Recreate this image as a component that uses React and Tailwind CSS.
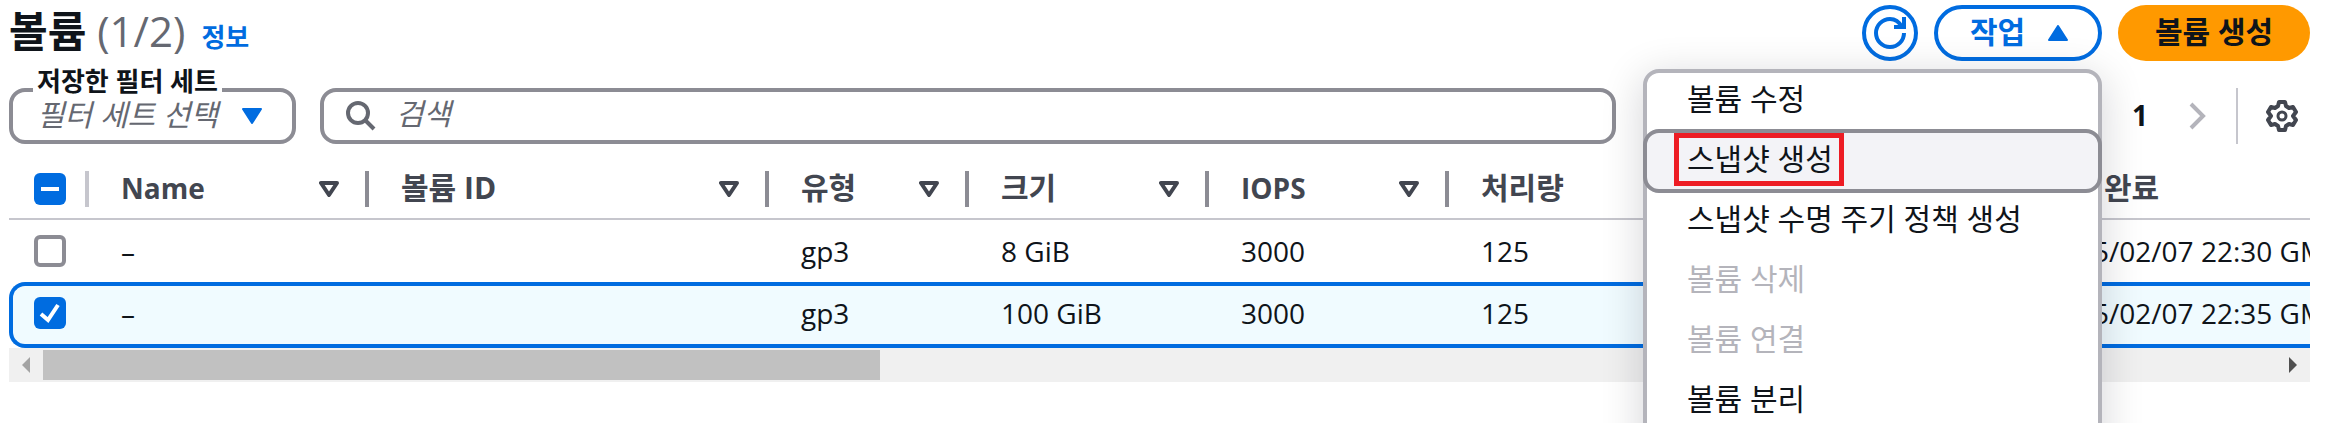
import React, { useState } from 'react';

const actions = [
  { label: '볼륨 수정' },
  { label: '스냅샷 생성', active: true },
  { label: '스냅샷 수명 주기 정책 생성' },
  { label: '볼륨 삭제', disabled: true },
  { label: '볼륨 연결', disabled: true },
  { label: '볼륨 분리' },
];

const columns = [
  { key: 'name', label: 'Name', width: 'w-[280px]' },
  { key: 'volumeId', label: '볼륨 ID', width: 'w-[400px]' },
  { key: 'type', label: '유형', width: 'w-[200px]' },
  { key: 'size', label: '크기', width: 'w-[240px]' },
  { key: 'iops', label: 'IOPS', width: 'w-[240px]' },
  { key: 'throughput', label: '처리량', width: 'w-[280px]' },
  { key: 'snapshot', label: '', width: 'w-[280px]' },
  { key: 'created', label: '생성 완료', width: '' },
];

const volumes = [
  { id: 1, name: '–', type: 'gp3', size: '8 GiB', iops: '3000', throughput: '125', created: '2025/02/07 22:30 GMT+9' },
  { id: 2, name: '–', type: 'gp3', size: '100 GiB', iops: '3000', throughput: '125', created: '2025/02/07 22:35 GMT+9' },
];

const SortIcon = () => (
  <svg width="20" height="16" viewBox="0 0 20 16" fill="none" stroke="currentColor" strokeWidth="4" strokeLinejoin="round" aria-hidden="true">
    <path d="M2 2h16l-8 12z" />
  </svg>
);

const Caret = ({ up }) => (
  <svg width="20" height="16" viewBox="0 0 20 16" fill="currentColor" stroke="currentColor" strokeWidth="2" strokeLinejoin="round" aria-hidden="true">
    <path d={up ? 'M10 1l9 14H1z' : 'M1 1h18l-9 14z'} />
  </svg>
);

const Checkbox = ({ label, checked, mixed, onChange }) => (
  <span className="relative block size-8">
    <input
      type="checkbox"
      aria-label={label}
      checked={checked}
      onChange={onChange}
      className={`block size-8 appearance-none rounded-md ${checked ? 'bg-[#006ce0]' : 'border-4 border-[#8c8c94] bg-white'}`}
    />
    {checked && (
      <svg className="pointer-events-none absolute inset-0" width="32" height="32" viewBox="0 0 32 32" fill="none" stroke="#fff" strokeWidth="4" aria-hidden="true">
        <path d={mixed ? 'M7 16h18' : 'M7 17l7 6L24 8'} />
      </svg>
    )}
  </span>
);

const ActionsMenu = () => (
  <div className="absolute right-0 top-16 z-10 w-[459px] rounded-2xl border-4 border-[#b4b4bb] bg-white pb-16 shadow-[0_8px_40px_2px_rgba(0,7,22,0.16)]">
    <ul role="menu" className="-mt-0.5 text-[30px] leading-9">
      {actions.map(({ label, active, disabled }) => (
        <li key={label} role="none">
          {active ? (
            <button role="menuitem" className="-mx-1 -my-0.5 flex h-16 w-[459px] items-start rounded-2xl border-4 border-[#8c8c94] bg-[#f3f3f7] pl-[27px]">
              <span className="flex h-[53px] items-center border-[5px] border-[#ed1c24] pb-0.5 pl-2 pr-1.5">{label}</span>
            </button>
          ) : (
            <button role="menuitem" disabled={disabled} className="flex h-15 w-full items-center pb-1 pl-10 disabled:text-[#b4b4bb]">
              {label}
            </button>
          )}
        </li>
      ))}
    </ul>
  </div>
);

const Header = ({ selectedCount }) => (
  <header className="flex items-start justify-between pt-[5px]">
    <div className="flex h-14 items-baseline">
      <h1 className="text-[42px] font-bold leading-13">
        볼륨 <span className="font-normal text-[#656871]">({selectedCount}/{volumes.length})</span>
      </h1>
      <a href="#info" className="ml-4 text-[26px] font-bold leading-9 text-[#006ce0]">정보</a>
    </div>
    <div className="flex h-14 gap-4 text-[30px] font-bold">
      <button aria-label="새로 고침" className="flex size-14 items-center justify-center rounded-full border-4 border-[#006ce0] text-[#006ce0]">
        <svg width="32" height="32" viewBox="0 0 32 32" fill="none" stroke="currentColor" strokeWidth="4" aria-hidden="true">
          <path d="M30 16a14 14 0 1 1-14-14c5 0 9 2.500 12 8" />
          <path d="M30 0v10H20" />
        </svg>
      </button>
      <div className="relative">
        <button aria-expanded="true" className="flex h-14 w-[168px] items-center justify-between rounded-full border-4 border-[#006ce0] pl-8 pr-[30px] text-[#006ce0]">
          <span className="pb-1">작업</span>
          <Caret up />
        </button>
        <div className="font-normal"><ActionsMenu /></div>
      </div>
      <button className="h-14 w-48 rounded-full bg-[#ff9900] pb-1">볼륨 생성</button>
    </div>
  </header>
);

const Filters = () => (
  <div className="mt-[27px] flex h-14 items-center">
    <div className="relative w-[287px] shrink-0">
      <label htmlFor="filter-set" className="absolute -top-[21px] left-6 bg-white px-1 text-[26px] font-bold leading-7">저장한 필터 세트</label>
      <select id="filter-set" className="block h-14 w-full appearance-none rounded-2xl border-4 border-[#8c8c94] pb-1.5 pl-6 pr-[68px] text-[30px] italic text-[#656871]">
        <option>필터 세트 선택</option>
      </select>
      <span className="pointer-events-none absolute right-[34px] top-5 text-[#006ce0]"><Caret /></span>
    </div>
    <div className="ml-6 flex h-14 max-w-[1296px] flex-1 items-center rounded-2xl border-4 border-[#8c8c94] pl-[22px] text-[#656871]">
      <svg width="30" height="30" viewBox="0 0 30 30" fill="none" stroke="currentColor" strokeWidth="4" aria-hidden="true">
        <circle cx="12" cy="12" r="10" />
        <path d="M19 19l9 9" />
      </svg>
      <input type="search" aria-label="검색" placeholder="검색" className="ml-5 h-12 flex-1 pb-1.5 text-[30px] italic outline-none placeholder:text-[#656871]" />
    </div>
    <nav className="ml-auto flex h-14 items-center">
      <button className="w-8 pb-0.5 text-[28px] font-bold">1</button>
      <button aria-label="다음 페이지" disabled className="ml-8 text-[#b4b4bb]">
        <svg width="20" height="28" viewBox="0 0 20 28" fill="none" stroke="currentColor" strokeWidth="4" aria-hidden="true">
          <path d="M3 2l12 12L3 26" />
        </svg>
      </button>
      <span className="ml-7 h-14 w-0.5 bg-[#c6c6cd]" />
      <button aria-label="기본 설정" className="ml-7 mr-3 text-[#424650]">
        <svg width="32" height="32" viewBox="0 0 32 32" fill="none" stroke="currentColor" strokeWidth="4" strokeLinejoin="round" aria-hidden="true">
          <path d="M13 2h6l1 4 3 2 4-1 3 5-3 4 3 4-3 5-4-1-3 2-1 4h-6l-1-4-3-2-4 1-3-5 3-4-3-4 3-5 4 1 3-2z" />
          <circle cx="16" cy="16" r="4" strokeWidth="3" />
        </svg>
      </button>
    </nav>
  </div>
);

const VolumeTable = ({ selected, onToggle }) => (
  <div className="mt-4 overflow-hidden">
    <table className="w-full table-fixed border-separate border-spacing-0 text-left text-[28px] leading-9">
      <thead className="text-[#424650]">
        <tr>
          <th className="h-15 w-20 border-b-2 border-[#c6c6cd] p-0">
            <div className="flex items-center justify-between pl-[25px]">
              <Checkbox label="모두 선택" checked mixed onChange={() => {}} />
              <span className="h-9 w-1 bg-[#c6c6cd]" />
            </div>
          </th>
          {columns.map((col) => (
            <th key={col.key} className={`h-15 border-b-2 border-[#c6c6cd] p-0 ${col.width}`}>
              <div className="flex items-center pl-8">
                <span className={`flex-1 whitespace-nowrap pb-0.5 font-bold leading-8 ${/^[A-Z]/i.test(col.label) ? 'text-[28px]' : 'text-[30px]'}`}>{col.label}</span>
                {col.width && (
                  <>
                    <SortIcon />
                    <span className="ml-[26px] h-9 w-1 bg-[#8c8c94]" />
                  </>
                )}
              </div>
            </th>
          ))}
        </tr>
      </thead>
      <tbody>
        {volumes.map((volume) => {
          const isSelected = selected.includes(volume.id);
          const cell = isSelected ? 'h-[66px] border-y-4 border-[#006ce0] bg-[#f0fbff] pt-0 pb-1' : 'h-[62px] py-0';
          return (
            <tr key={volume.id}>
              <td className={`${cell} pr-0 ${isSelected ? 'rounded-l-2xl border-l-4 pl-[21px]' : 'pl-[25px]'}`}>
                <Checkbox label={`볼륨 ${volume.id}`} checked={isSelected} onChange={() => onToggle(volume.id)} />
              </td>
              {columns.map((col) => (
                <td key={col.key} className={`${cell} overflow-hidden whitespace-nowrap pr-0 ${col.key === 'created' ? 'pl-9' : 'pl-8'}`}>{volume[col.key]}</td>
              ))}
            </tr>
          );
        })}
      </tbody>
    </table>
    <div className="flex h-[34px] items-center bg-[#f0f0f0]">
      <svg className="mx-[13px] shrink-0" width="8" height="16" viewBox="0 0 8 16" fill="#a3a3a3" aria-hidden="true"><path d="M8 0v16L0 8z" /></svg>
      <div className="flex-1">
        <div className="h-[30px] w-[37.5%] bg-[#c1c1c1]" />
      </div>
      <svg className="mx-[13px] shrink-0" width="8" height="16" viewBox="0 0 8 16" fill="#505050" aria-hidden="true"><path d="M0 0v16l8-8z" /></svg>
    </div>
  </div>
);

const App = () => {
  const [selected, setSelected] = useState([2]);

  const handleToggle = (id) => {
    setSelected(selected.includes(id) ? selected.filter((s) => s !== id) : [...selected, id]);
  };

  return (
    <main className="min-h-screen overflow-hidden bg-white pl-[9px] pr-4 font-['Open_Sans','Noto_Sans_CJK_KR',sans-serif] text-[#0f141a]">
      <Header selectedCount={selected.length} />
      <Filters />
      <VolumeTable selected={selected} onToggle={handleToggle} />
    </main>
  );
};

export default App;
